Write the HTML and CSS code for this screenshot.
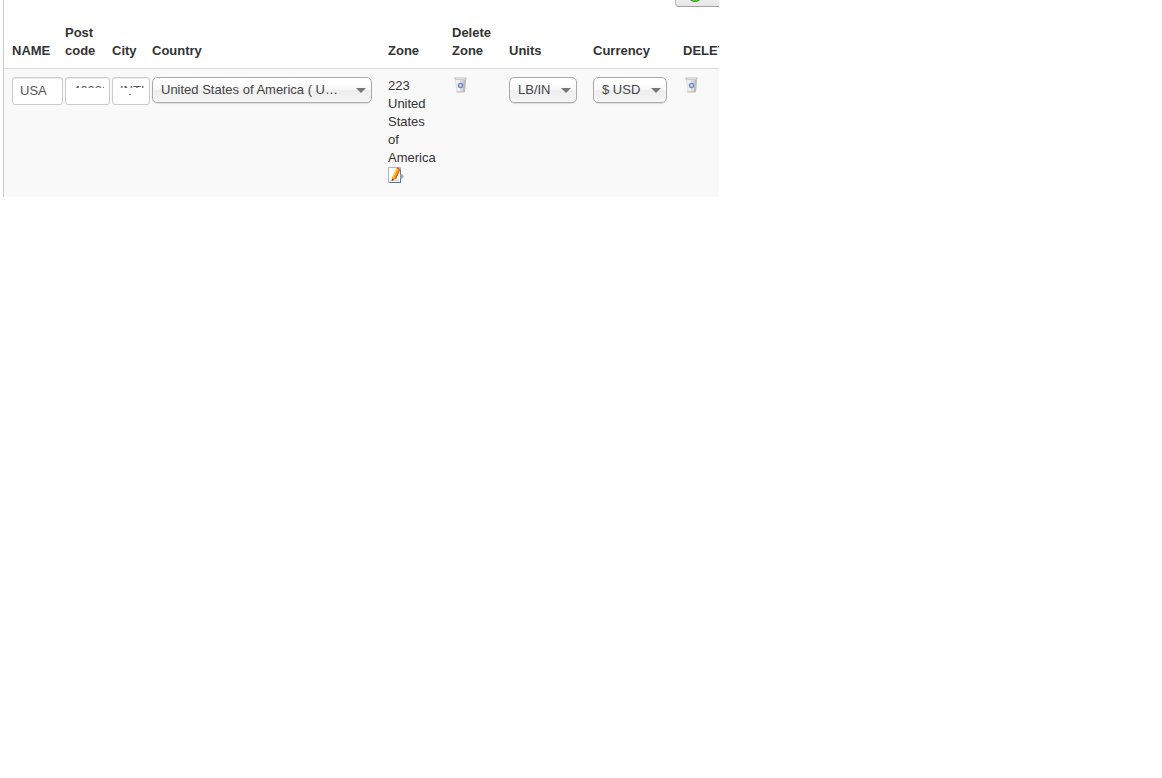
FILE: index.html
```html
<!DOCTYPE html>
<html lang="en">
<head>
    <meta charset="UTF-8">
    <meta name="viewport" content="width=device-width, initial-scale=1.0">
    <title>Warehouses</title>
    <link rel="stylesheet" href="styles.css">
</head>
<body>
    <!-- Shared icons -->
    <svg class="sprite" aria-hidden="true">
        <symbol id="trash" viewBox="0 0 16 16">
            <path d="M3 2h11l-1 13H4.500z" fill="#d9d9db"/>
            <path d="M4 3h4v11.500H5z" fill="#f0f0f0"/>
            <path d="M11.500 3H14l-1 12h-2z" fill="#bdbdc0"/>
            <path d="M2.500.500h12v2h-12z" fill="#bcbcbe"/>
            <path d="M4 1.500h9" stroke="#dedede"/>
            <path d="M4.500 15h8" stroke="#b9b9bb"/>
            <circle cx="8.500" cy="8.500" r="2" fill="#e4e8f6" stroke="#7389cc" stroke-width="1.500"/>
        </symbol>
    </svg>

    <div class="panel">
        <div class="panel-inner">
            <div class="toolbar">
                <button type="button" class="btn-new" aria-label="Add">
                    <svg width="16" height="16" viewBox="0 0 16 16" aria-hidden="true">
                        <circle cx="8" cy="8" r="7.500" fill="#4be01f" stroke="#2c9a10"/>
                        <path d="M8 4v8M4 8h8" stroke="#fff" stroke-width="2"/>
                    </svg>
                </button>
            </div>
            <table>
                <colgroup>
                    <col class="col-name">
                    <col class="col-post">
                    <col class="col-city">
                    <col class="col-country">
                    <col class="col-zone">
                    <col class="col-delzone">
                    <col class="col-units">
                    <col class="col-currency">
                    <col class="col-delete">
                </colgroup>
                <thead>
                    <tr>
                        <th>NAME</th>
                        <th>Post code</th>
                        <th>City</th>
                        <th>Country</th>
                        <th>Zone</th>
                        <th>Delete Zone</th>
                        <th>Units</th>
                        <th>Currency</th>
                        <th>DELETE</th>
                    </tr>
                </thead>
                <tbody>
                    <tr>
                        <td><input type="text" class="input-name" value="USA" aria-label="Name"></td>
                        <td><div class="masked"><input type="text" class="input-post" value="46032" aria-label="Post code"></div></td>
                        <td><div class="masked masked-city"><input type="text" class="input-city" value="INTL" aria-label="City"></div></td>
                        <td>
                            <div class="select select-country">
                                <select aria-label="Country">
                                    <option>United States of America ( USA )</option>
                                </select>
                            </div>
                        </td>
                        <td>
                            223 United States of America
                            <a href="#" class="edit" aria-label="Edit zone">
                                <svg width="16" height="16" viewBox="0 0 16 16" aria-hidden="true">
                                    <path d="M.5.5h12v15H.5z" fill="#fff" stroke="#a9b6c6"/>
                                    <path d="M12.5 3v12.5H1" fill="none" stroke="#66768c"/>
                                    <path d="M2 13.5h9" stroke="#dde3ea" stroke-width="2"/>
                                    <path d="M12.500 7h1.500l2 2.500-2 2.500h-1.500z" fill="#a3b0bd"/>
                                    <path d="M8.500 1.200l3.600 1.500L8 12l-4.200 2 .2-3.800z" fill="#f99d1c"/>
                                    <path d="M8.500 1.200l1.300.500-4.300 9.200-1.500-.6z" fill="#ffd15c"/>
                                    <path d="M11.200 2.300l1.200.4L8 12l-1.500-.5z" fill="#dc6e0a"/>
                                    <path d="M9 .2l3.600 1.500-.6 1.200-3.600-1.500z" fill="#e8613a"/>
                                    <path d="M4 11.800l1.800.9-2 1.400z" fill="#333"/>
                                </svg>
                            </a>
                        </td>
                        <td><a href="#" class="trash" aria-label="Delete zone"><svg width="16" height="16" aria-hidden="true"><use href="#trash"/></svg></a></td>
                        <td>
                            <div class="select">
                                <select aria-label="Units">
                                    <option>LB/IN</option>
                                    <option>KG/CM</option>
                                </select>
                            </div>
                        </td>
                        <td>
                            <div class="select">
                                <select aria-label="Currency">
                                    <option>$ USD</option>
                                </select>
                            </div>
                        </td>
                        <td><a href="#" class="trash" aria-label="Delete row"><svg width="16" height="16" aria-hidden="true"><use href="#trash"/></svg></a></td>
                    </tr>
                </tbody>
            </table>
        </div>
    </div>
</body>
</html>
```
FILE: styles.css
```css
* {
    box-sizing: border-box;
}
body {
    margin: 0;
    background-color: #fff;
    color: #333;
    font-family: "Liberation Sans", Arial, sans-serif;
    font-size: 13px;
    line-height: 18px;
}
.sprite {
    display: none;
}
.panel {
    margin: 0 443px 0 3px;
    border-left: 1px solid #ccc;
    overflow: hidden;
}
.panel-inner {
    width: max-content;
}

/* Toolbar */
.toolbar {
    display: flex;
    justify-content: flex-end;
    align-items: flex-end;
    height: 7px;
    margin-bottom: 9px;
    overflow: hidden;
}
.btn-new {
    display: flex;
    align-items: center;
    flex-shrink: 0;
    width: 72px;
    height: 26px;
    padding: 0 11px;
    border: 1px solid #bbb;
    border-bottom-color: #a2a2a2;
    border-radius: 4px;
    background: linear-gradient(#fff, #e6e6e6);
}

/* Table */
table {
    table-layout: fixed;
    width: 743px;
    border-collapse: separate;
    border-spacing: 0;
}
.col-name { width: 53px; }
.col-post { width: 47px; }
.col-city { width: 40px; }
.col-country { width: 236px; }
.col-zone { width: 64px; }
.col-delzone { width: 57px; }
.col-units { width: 84px; }
.col-currency { width: 90px; }
.col-delete { width: 72px; }
th, td {
    padding: 8px;
    text-align: left;
}
th {
    vertical-align: bottom;
    font-weight: bold;
}
tbody {
    background-color: #f9f9f9;
}
td {
    vertical-align: top;
    border-top: 1px solid #ddd;
}

/* Text boxes */
input {
    display: block;
    position: relative;
    height: 28px;
    padding: 3px 5px 5px 7px;
    border: 1px solid #ccc;
    border-radius: 3px;
    background-color: #fff;
    box-shadow: inset 0 1px 1px rgba(0, 0, 0, 0.075);
    color: #555;
    font: inherit;
}
.input-name { width: 51px; }
.input-post { width: 45px; }
.input-city { width: 38px; }

/* Hides the lower part of the value */
.masked {
    position: relative;
    width: max-content;
}
.masked::after {
    content: "";
    position: absolute;
    inset: 11px 2px 2px;
    background-color: #fff;
}
.masked-city::after {
    background-image: linear-gradient(#777, #777);
    background-size: 2px 1px;
    background-position: 15px 6px;
    background-repeat: no-repeat;
}

/* Drop-downs */
.select {
    position: relative;
}
.select select {
    appearance: none;
    display: block;
    width: 100%;
    height: 26px;
    padding: 0 24px 0 8px;
    border: 1px solid #aaa;
    border-radius: 5px;
    background: linear-gradient(#fff 20%, #f6f6f6 50%, #eee 52%, #f4f4f4 100%);
    box-shadow: inset 0 0 3px #fff, 0 1px 1px rgba(0, 0, 0, 0.1);
    color: #444;
    font: inherit;
    text-overflow: ellipsis;
}
.select-country select {
    padding-right: 30px;
}
.select::after {
    content: "";
    position: absolute;
    top: 11px;
    right: 6px;
    border: 5px solid transparent;
    border-top-color: #777;
    border-bottom: 0;
    pointer-events: none;
}

/* Icons */
.edit {
    display: block;
    height: 22px;
}
.trash {
    display: block;
    height: 18px;
}
.edit svg, .trash svg {
    display: block;
}
```
